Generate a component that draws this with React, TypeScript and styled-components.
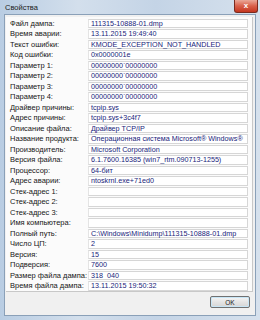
import styled, { createGlobalStyle } from 'styled-components';

const GlobalStyle = createGlobalStyle`
  html, body {
    margin: 0;
    padding: 0;
    width: 260px;
    height: 320px;
    overflow: hidden;
  }
`;

const rows: [string, string][] = [
  ['Файл дампа:', '111315-10888-01.dmp'],
  ['Время аварии:', '13.11.2015 19:49:40'],
  ['Текст ошибки:', 'KMODE_EXCEPTION_NOT_HANDLED'],
  ['Код ошибки:', '0x0000001e'],
  ['Параметр 1:', '00000000`00000000'],
  ['Параметр 2:', '00000000`00000000'],
  ['Параметр 3:', '00000000`00000000'],
  ['Параметр 4:', '00000000`00000000'],
  ['Драйвер причины:', 'tcpip.sys'],
  ['Адрес причины:', 'tcpip.sys+3c4f7'],
  ['Описание файла:', 'Драйвер TCP/IP'],
  ['Название продукта:', 'Операционная система Microsoft® Windows®'],
  ['Производитель:', 'Microsoft Corporation'],
  ['Версия файла:', '6.1.7600.16385 (win7_rtm.090713-1255)'],
  ['Процессор:', '64-бит'],
  ['Адрес аварии:', 'ntoskrnl.exe+71ed0'],
  ['Стек-адрес 1:', ''],
  ['Стек-адрес 2:', ''],
  ['Стек-адрес 3:', ''],
  ['Имя компьютера:', ''],
  ['Полный путь:', 'C:\\Windows\\Minidump\\111315-10888-01.dmp'],
  ['Число ЦП:', '2'],
  ['Версия:', '15'],
  ['Подверсия:', '7600'],
  ['Размер файла дампа:', '318  040'],
  ['Время файла дампа:', '13.11.2015 19:50:32'],
];

const Window = styled.div`
  width: 260px;
  height: 320px;
  box-sizing: border-box;
  display: flex;
  flex-direction: column;
  background: linear-gradient(90deg, #b9cde3 0%, #d3dfec 30%, #c4d4e6 60%, #d6e1ed 100%);
  font-family: 'Liberation Sans', Arial, sans-serif;
  padding: 0 4px 4px 4px;
`;

const TitleBar = styled.div`
  height: 14px;
  display: flex;
  align-items: center;
  justify-content: space-between;
`;

const Title = styled.span`
  font-size: 7.5px;
  color: #1a1a1a;
  padding-left: 1px;
`;

const CloseButton = styled.div`
  width: 22px;
  height: 12px;
  margin-top: -2px;
  margin-right: -2px;
  border: 1px solid #7a2a1e;
  border-top: none;
  border-radius: 0 0 3px 3px;
  background: linear-gradient(180deg, #eaa898 0%, #d9604a 50%, #c4361f 100%);
  color: #fff;
  font-size: 8px;
  font-weight: bold;
  display: flex;
  align-items: center;
  justify-content: center;
  line-height: 1;
`;

const Client = styled.div`
  flex: 1;
  background: #f0f0f0;
  border: 1px solid #8aa0b8;
  display: flex;
  flex-direction: column;
  padding: 2px 2px 3px 1px;
`;

const Panel = styled.div`
  background: #fbfbfb;
  border-right: 1px solid #c8c8c8;
  border-bottom: 1px solid #c8c8c8;
  padding: 1px 4px 0 4px;
  display: flex;
  flex-direction: column;
`;

const Row = styled.div`
  display: grid;
  grid-template-columns: 78px 1fr;
  height: 10.5px;
  align-items: center;
`;

const Label = styled.div`
  font-size: 7.5px;
  color: #161616;
  white-space: nowrap;
`;

const Value = styled.div`
  height: 9.5px;
  box-sizing: border-box;
  border: 1px solid #d6d6d6;
  border-left-color: #e4e4e4;
  background: #fff;
  font-size: 7.2px;
  color: #17237a;
  padding-left: 2px;
  line-height: 7.5px;
  white-space: pre;
`;

const Footer = styled.div`
  display: flex;
  justify-content: flex-end;
  padding: 4px 3px 0 0;
`;

const OkButton = styled.button`
  width: 40px;
  height: 12px;
  padding: 0;
  border: 1px solid #707070;
  border-radius: 2px;
  background: linear-gradient(180deg, #f6f6f6 0%, #e4e4e4 50%, #d6d6d6 100%);
  font-family: 'Liberation Sans', Arial, sans-serif;
  font-size: 6.5px;
  color: #222;
  box-shadow: inset 0 0 0 1px #c8e6f6;
`;

export default function App() {
  return (
    <>
      <GlobalStyle />
      <Window>
        <TitleBar>
          <Title>Свойства</Title>
          <CloseButton>x</CloseButton>
        </TitleBar>
        <Client>
          <Panel>
            {rows.map(([label, value]) => (
              <Row key={label}>
                <Label>{label}</Label>
                <Value>{value}</Value>
              </Row>
            ))}
          </Panel>
          <Footer>
            <OkButton>OK</OkButton>
          </Footer>
        </Client>
      </Window>
    </>
  );
}
